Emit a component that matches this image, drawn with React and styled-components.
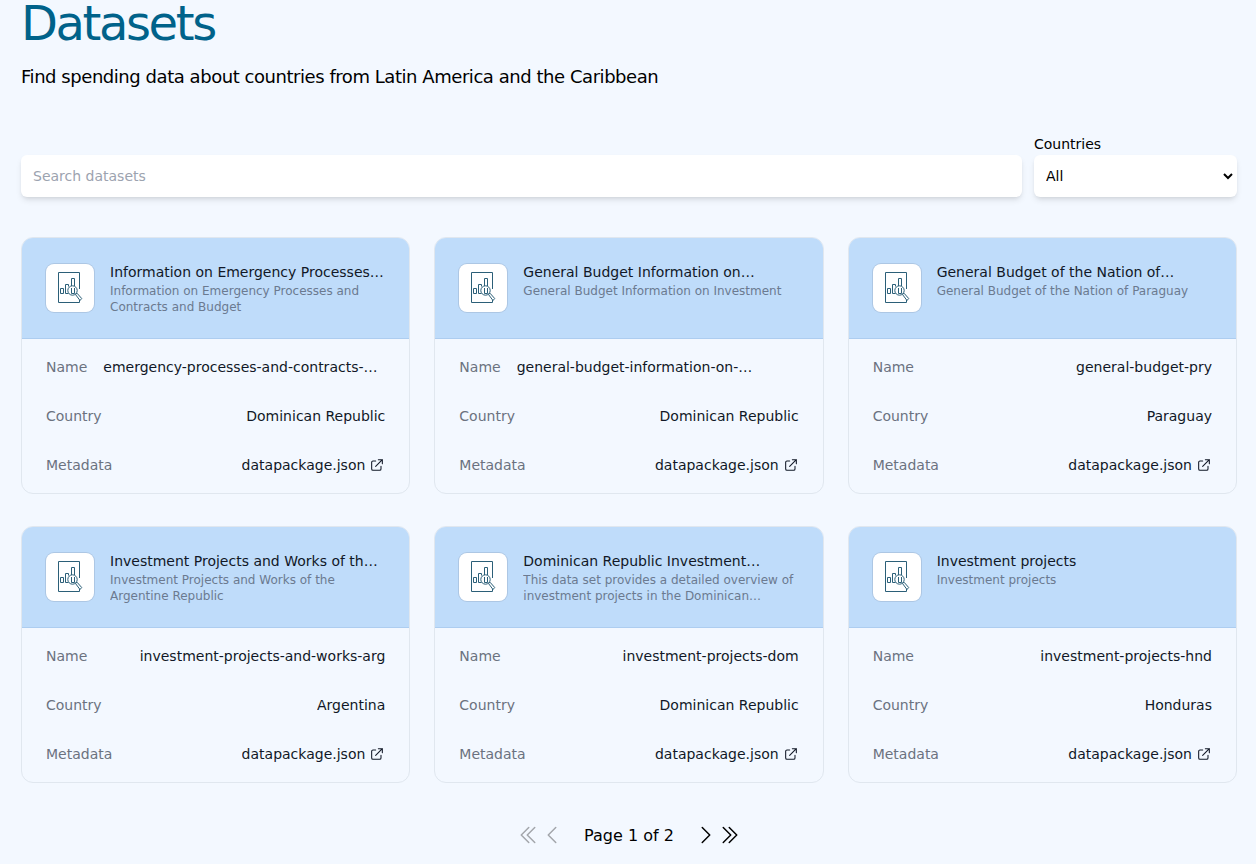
import React from "react";
import styled, { createGlobalStyle } from "styled-components";

const GlobalStyle = createGlobalStyle`
  *, *::before, *::after { box-sizing: border-box; }
  body {
    margin: 0;
    background: #f3f8ff;
    color: #000;
    font-family: "DejaVu Sans", sans-serif;
    font-size: 14px;
    line-height: 20px;
  }
  h1, h2, p, dl, dd, ul { margin: 0; padding: 0; }
`;

const Page = styled.main`
  padding: 0 19px 16px 21px;
`;

const Title = styled.h1`
  color: #00628a;
  font-size: 48px;
  line-height: 46px;
  font-weight: 400;
  letter-spacing: -0.05em;
`;

const Subtitle = styled.p`
  margin-top: 17px;
  font-size: 18px;
  line-height: 28px;
  letter-spacing: -0.025em;
`;

const Filters = styled.form`
  display: flex;
  align-items: flex-end;
  gap: 12px;
  margin-top: 42px;
`;

const Field = styled.div`
  display: flex;
  flex-direction: column;
  flex: ${(p) => (p.$grow ? "1 1 0" : "0 0 203px")};
  min-width: 0;
`;

const controlStyle = `
  width: 100%;
  height: 42px;
  border: 1px solid transparent;
  border-radius: 6px;
  background-color: #fff;
  box-shadow: 0 4px 6px -1px rgba(0, 0, 0, 0.1), 0 2px 4px -2px rgba(0, 0, 0, 0.1);
  font: inherit;
  color: #000;
`;

const SearchInput = styled.input`
  ${controlStyle}
  padding: 0 11px;
  &::placeholder { color: #9ca3af; opacity: 1; }
`;

const CountrySelect = styled.select`
  ${controlStyle}
  padding: 0 0 0 7px;
`;

const FieldLabel = styled.label`
  line-height: 22px;
`;

const CardGrid = styled.ul`
  display: grid;
  grid-template-columns: repeat(3, minmax(0, 1fr));
  gap: 32px 24px;
  margin-top: 40px;
  list-style: none;
`;

const Card = styled.li`
  overflow: hidden;
  border: 1px solid #e0e7ef;
  border-radius: 12px;
`;

const CardHeader = styled.div`
  display: flex;
  align-items: flex-start;
  gap: 16px;
  padding: 24px 24px 23px;
  border-bottom: 1px solid #adcdf0;
  background: #bfdcfa;
`;

const Thumb = styled.div`
  flex: none;
  display: grid;
  place-items: center;
  width: 48px;
  height: 48px;
  margin-top: 2px;
  border-radius: 8px;
  background: #fff;
  box-shadow: 0 0 0 1px rgba(17, 24, 39, 0.1);
`;

const Heading = styled.div`
  flex: 1;
  min-width: 0;
  min-height: 53px;
`;

const clamp = (lines) => `
  display: -webkit-box;
  -webkit-box-orient: vertical;
  -webkit-line-clamp: ${lines};
  overflow: hidden;
`;

const CardTitle = styled.h2`
  ${clamp(1)}
  font-size: 14px;
  line-height: 20px;
  font-weight: 400;
  color: #111827;
`;

const CardText = styled.p`
  ${clamp(2)}
  margin-top: 1px;
  font-size: 12px;
  line-height: 16px;
  color: #6b7a90;
`;

const Details = styled.dl`
  padding: 4px 24px;
`;

const Row = styled.div`
  display: flex;
  justify-content: space-between;
  gap: 16px;
  padding: 12px 0;
  line-height: 24px;
  & + & { border-top: 1px solid transparent; }
`;

const Term = styled.dt`
  color: #6b7280;
`;

const Value = styled.dd`
  ${clamp(1)}
  color: #111827;
`;

const MetaLink = styled.a`
  display: flex;
  align-items: center;
  gap: 4px;
  color: inherit;
  text-decoration: none;
`;

const Pagination = styled.nav`
  display: flex;
  align-items: center;
  justify-content: center;
  margin-top: 39px;
  font-size: 16px;
  line-height: 24px;
`;

const PageLabel = styled.span`
  margin: 0 20px;
  padding-top: 2px;
`;

const PageButton = styled.button`
  display: flex;
  padding: 0;
  border: 0;
  background: none;
  color: #000;
  cursor: pointer;
  &:disabled { color: #a3a6ab; cursor: default; }
`;

const DatasetIcon = () => (
  <svg width="28" height="32" viewBox="0 0 28 32" fill="none" stroke="#2b5f78" aria-hidden="true">
    <path d="M23.500 17V.5H2.500V30.500H23.500V28" />
    <path d="M4.500 16.500h3v5h-3zM12.500 14.500V12.500h-3v9h3M15.500 14V6.500h3V14" />
    <path d="M15.500 16v5.500h3V16" />
    <circle cx="16.500" cy="18.500" r="4.700" />
    <path d="M19.500 22.500l1.500-1.300 4.700 5.300-1.700 2z" />
  </svg>
);

const ExternalIcon = () => (
  <svg width="16" height="16" viewBox="0 0 24 24" fill="none" stroke="currentColor" strokeWidth="1.600" strokeLinecap="round" strokeLinejoin="round" aria-hidden="true">
    <path d="M10 6H6a2 2 0 0 0-2 2v10a2 2 0 0 0 2 2h10a2 2 0 0 0 2-2v-4M14 4h6m0 0v6m0-6L10 14" />
  </svg>
);

const chevrons = {
  first: "M18.750 19.500l-7.500-7.500 7.500-7.500m-6 15L5.250 12l7.500-7.500",
  previous: "M15.750 19.500L8.250 12l7.500-7.500",
  next: "M8.250 4.500l7.500 7.500-7.500 7.500",
  last: "M5.250 4.500l7.500 7.500-7.500 7.500m6-15l7.500 7.500-7.500 7.500",
};

const PageStep = ({ to, disabled }) => (
  <PageButton type="button" aria-label={`${to} page`} disabled={disabled}>
    <svg width="24" height="24" viewBox="0 0 24 24" fill="none" stroke="currentColor" strokeWidth="1.500" strokeLinecap="round" strokeLinejoin="round" aria-hidden="true">
      <path d={chevrons[to]} />
    </svg>
  </PageButton>
);

const datasets = [
  {
    title: "Information on Emergency Processes and Contracts and Budget",
    text: "Information on Emergency Processes and Contracts and Budget",
    name: "emergency-processes-and-contracts-budget",
    country: "Dominican Republic",
  },
  {
    title: "General Budget Information on Investment",
    text: "General Budget Information on Investment",
    name: "general-budget-information-on-investment",
    country: "Dominican Republic",
  },
  {
    title: "General Budget of the Nation of Paraguay",
    text: "General Budget of the Nation of Paraguay",
    name: "general-budget-pry",
    country: "Paraguay",
  },
  {
    title: "Investment Projects and Works of the Argentine Republic",
    text: "Investment Projects and Works of the Argentine Republic",
    name: "investment-projects-and-works-arg",
    country: "Argentina",
  },
  {
    title: "Dominican Republic Investment Projects",
    text: "This data set provides a detailed overview of investment projects in the Dominican Republic and their budgets",
    name: "investment-projects-dom",
    country: "Dominican Republic",
  },
  {
    title: "Investment projects",
    text: "Investment projects",
    name: "investment-projects-hnd",
    country: "Honduras",
  },
];

const DatasetCard = ({ title, text, name, country }) => (
  <Card>
    <CardHeader>
      <Thumb><DatasetIcon /></Thumb>
      <Heading>
        <CardTitle>{title}</CardTitle>
        <CardText>{text}</CardText>
      </Heading>
    </CardHeader>
    <Details>
      <Row>
        <Term>Name</Term>
        <Value>{name}</Value>
      </Row>
      <Row>
        <Term>Country</Term>
        <Value>{country}</Value>
      </Row>
      <Row>
        <Term>Metadata</Term>
        <Value>
          <MetaLink href="#datapackage">datapackage.json <ExternalIcon /></MetaLink>
        </Value>
      </Row>
    </Details>
  </Card>
);

export default function App() {
  return (
    <>
      <GlobalStyle />
      <Page>
        <Title>Datasets</Title>
        <Subtitle>Find spending data about countries from Latin America and the Caribbean</Subtitle>
        <Filters>
          <Field $grow>
            <SearchInput type="text" placeholder="Search datasets" aria-label="Search datasets" />
          </Field>
          <Field>
            <FieldLabel htmlFor="country">Countries</FieldLabel>
            <CountrySelect id="country" defaultValue="All">
              <option>All</option>
              <option>Argentina</option>
              <option>Dominican Republic</option>
              <option>Honduras</option>
              <option>Paraguay</option>
            </CountrySelect>
          </Field>
        </Filters>
        <CardGrid>
          {datasets.map((d) => <DatasetCard key={d.name} {...d} />)}
        </CardGrid>
        <Pagination aria-label="Pagination">
          <PageStep to="first" disabled />
          <PageStep to="previous" disabled />
          <PageLabel>Page 1 of 2</PageLabel>
          <PageStep to="next" />
          <PageStep to="last" />
        </Pagination>
      </Page>
    </>
  );
}
